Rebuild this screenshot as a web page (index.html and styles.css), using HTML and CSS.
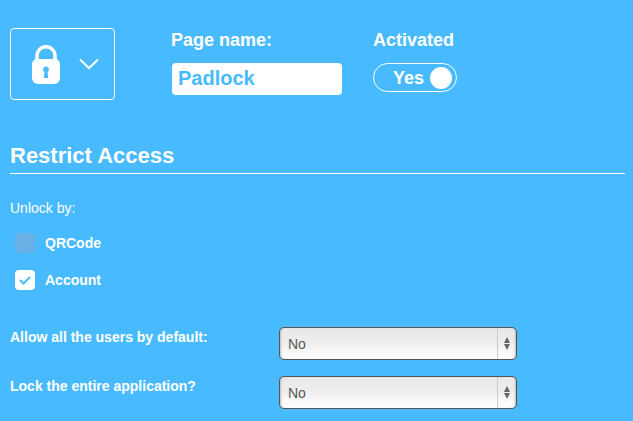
FILE: index.html
```
<!DOCTYPE html>
<html lang="en">
<head>
<meta charset="utf-8">
<title>Padlock</title>
<link rel="stylesheet" href="styles.css">
</head>
<body>
<div class="page">
  <header class="top">
    <div class="icon-picker">
      <svg class="lock" width="28" height="39" viewBox="0 0 28 39"><path d="M5 16V10.750a9 9 0 0 1 18 0V16" fill="none" stroke="#fff" stroke-width="3.500"/><path fill-rule="evenodd" fill="#fff" d="M5 14h18a5 5 0 0 1 5 5v14a6 6 0 0 1-6 6H6a6 6 0 0 1-6-6V19a5 5 0 0 1 5-5zM14 21.500a2.900 2.900 0 0 0-1.500 5.400L11.700 33h4.600l-.8-6.100A2.900 2.900 0 0 0 14 21.500z"/></svg>
      <svg class="chev" width="20" height="12" viewBox="0 0 20 12"><path d="M1 1.500l9 8.500 9-8.500" fill="none" stroke="#fff" stroke-width="2"/></svg>
    </div>
    <div class="field name-field">
      <label class="field-label">Page name:</label>
      <div class="name-input">Padlock</div>
    </div>
    <div class="field active-field">
      <label class="field-label">Activated</label>
      <div class="toggle"><span class="toggle-text">Yes</span><span class="knob"></span></div>
    </div>
  </header>
  <h2 class="section-title">Restrict Access</h2>
  <p class="unlock">Unlock by:</p>
  <div class="check-row"><span class="box box-off"></span><span class="check-label">QRCode</span></div>
  <div class="check-row"><span class="box box-on"><svg width="14" height="12" viewBox="0 0 14 12"><path d="M2 6l3.500 3.500L12 3" fill="none" stroke="#48baff" stroke-width="2"/></svg></span><span class="check-label">Account</span></div>
  <div class="select-row first">
    <span class="select-label">Allow all the users by default:</span>
    <div class="select"><span class="select-value">No</span><span class="arrows"><i class="up"></i><i class="down"></i></span></div>
  </div>
  <div class="select-row">
    <span class="select-label">Lock the entire application?</span>
    <div class="select"><span class="select-value">No</span><span class="arrows"><i class="up"></i><i class="down"></i></span></div>
  </div>
</div>
</body>
</html>
```
FILE: styles.css
```
* { box-sizing: border-box; }
html, body { margin: 0; height: 100%; }
body { background: #48baff; color: #fff; font-family: "Liberation Sans", Arial, sans-serif; overflow: hidden; }
.page { padding: 28px 8px 0 10px; }
.top { display: flex; align-items: flex-start; height: 72px; }
.icon-picker { width: 105px; height: 72px; border: 1px solid #fff; border-radius: 4px; display: flex; align-items: center; padding-left: 21px; gap: 19px; }
.field { display: flex; flex-direction: column; padding-top: 1px; }
.name-field { margin-left: 56px; width: 202px; }
.field-label { font-size: 18px; font-weight: 700; line-height: 22px; height: 34px; }
.name-input { margin-left: 1px; width: 170px; height: 32px; background: #fff; border-radius: 4px; color: #48baff; font-size: 20px; font-weight: 700; line-height: 31px; padding-left: 6px; }
.toggle { width: 84px; height: 29px; border: 1px solid #fff; border-radius: 15px; display: flex; align-items: center; padding-left: 19px; }
.toggle-text { font-size: 18px; font-weight: 700; line-height: 29px; padding-top: 1px; }
.knob { width: 22px; height: 22px; background: #fff; border-radius: 50%; margin-left: 6px; }
.section-title { margin: 41px 0 0; font-size: 22px; line-height: 29px; height: 33px; font-weight: 700; border-bottom: 1px solid #fff; }
.unlock { margin: 25px 0 0; font-size: 14px; line-height: 18px; }
.check-row { display: flex; align-items: center; height: 20px; margin: 0 0 17px 5px; gap: 10px; }
.unlock + .check-row { margin-top: 16px; }
.box { width: 20px; height: 20px; border-radius: 4px; display: flex; align-items: center; justify-content: center; }
.box-off { background: #68b0e6; }
.box-on { background: #fff; }
.check-label { font-size: 14px; font-weight: 700; line-height: 22px; }
.select-row { display: flex; align-items: flex-start; height: 33px; margin-bottom: 16px; }
.select-row.first { margin-top: 37px; }
.select-label { width: 269px; font-size: 14px; font-weight: 700; line-height: 20px; }
.select { width: 238px; height: 33px; border: 1px solid #555; border-radius: 5px; background: linear-gradient(#e8e8e8, #ededed 40%, #fff); display: flex; justify-content: space-between; color: #555; box-shadow: inset 2px 0 2px -1px #bbb, inset -2px 0 2px -1px #bbb; }
.select-value { font-size: 14px; line-height: 33px; padding-left: 8px; }
.arrows { width: 19px; border-left: 1px solid #ccc; display: flex; flex-direction: column; align-items: center; justify-content: center; gap: 1px; }
.arrows i { width: 0; height: 0; border-left: 3.500px solid transparent; border-right: 3.500px solid transparent; }
.arrows .up { border-bottom: 6px solid #666; }
.arrows .down { border-top: 6px solid #666; }
```
